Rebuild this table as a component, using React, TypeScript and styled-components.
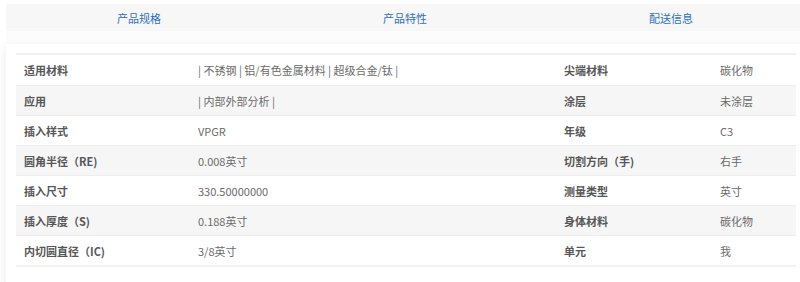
import * as React from 'react';
import styled, { createGlobalStyle } from 'styled-components';

const GlobalStyle = createGlobalStyle`
  html, body {
    margin: 0;
    padding: 0;
    background: #ffffff;
    font-family: "Noto Sans CJK SC", "Open Sans", sans-serif;
    overflow: hidden;
  }
`;

export const Page = styled.div`
  width: 800px;
  height: 282px;
  padding: 4px 0 0 6px;
  box-sizing: border-box;
  overflow: hidden;
`;

export const Tabs = styled.div`
  display: grid;
  grid-template-columns: repeat(3, 266px);
  width: 798px;
  height: 27px;
  background: #f7f7f7;
`;

export const Tab = styled.div`
  display: flex;
  align-items: center;
  justify-content: center;
  font-size: 11px;
  color: #2f6fbf;
`;

export const Gap = styled.div`
  height: 13px;
  background: #fcfcfc;
  width: 800px;
`;

export const Card = styled.div`
  background: #ffffff;
  padding: 9px 0 20px 10px;
  box-shadow: -2px 2px 8px rgba(0, 0, 0, 0.06);
  width: 800px;
`;

export const Table = styled.div`
  width: 780px;
  border-top: 2px solid #f0f0f0;
  border-bottom: 2px solid #f3f3f3;
`;

export const Row = styled.div<{ $striped: boolean }>`
  display: grid;
  grid-template-columns: 182px 366px 156px 1fr;
  height: 30px;
  align-items: center;
  background: ${(p): string => (p.$striped ? '#f6f6f6' : '#ffffff')};
  & + & {
    border-top: 1px solid #eeeeee;
    height: 29px;
  }
`;

export const Label = styled.div<{ $first?: boolean }>`
  padding-left: ${(p): string => (p.$first ? '8px' : '0')};
  font-size: 11px;
  font-weight: 700;
  color: #575757;
  white-space: nowrap;
`;

export const Value = styled.div`
  font-size: 11px;
  color: #6b6b6b;
  white-space: nowrap;
`;

const rows = [
  ['适用材料', '| 不锈钢 | 铝/有色金属材料 | 超级合金/钛 |', '尖端材料', '碳化物'],
  ['应用', '| 内部外部分析 |', '涂层', '未涂层'],
  ['插入样式', 'VPGR', '年级', 'C3'],
  ['圆角半径（RE)', '0.008英寸', '切割方向（手)', '右手'],
  ['插入尺寸', '330.50000000', '测量类型', '英寸'],
  ['插入厚度（S)', '0.188英寸', '身体材料', '碳化物'],
  ['内切圆直径（IC)', '3/8英寸', '单元', '我'],
];

export default function App(): React.ReactElement {
  return (
    <>
      <GlobalStyle />
      <Page>
        <Tabs>
          <Tab>产品规格</Tab>
          <Tab>产品特性</Tab>
          <Tab>配送信息</Tab>
        </Tabs>
        <Gap />
        <Card>
          <Table>
            {rows.map((r, i) => (
              <Row key={r[0]} $striped={i % 2 === 1}>
                <Label $first>{r[0]}</Label>
                <Value>{r[1]}</Value>
                <Label>{r[2]}</Label>
                <Value>{r[3]}</Value>
              </Row>
            ))}
          </Table>
        </Card>
      </Page>
    </>
  );
}
